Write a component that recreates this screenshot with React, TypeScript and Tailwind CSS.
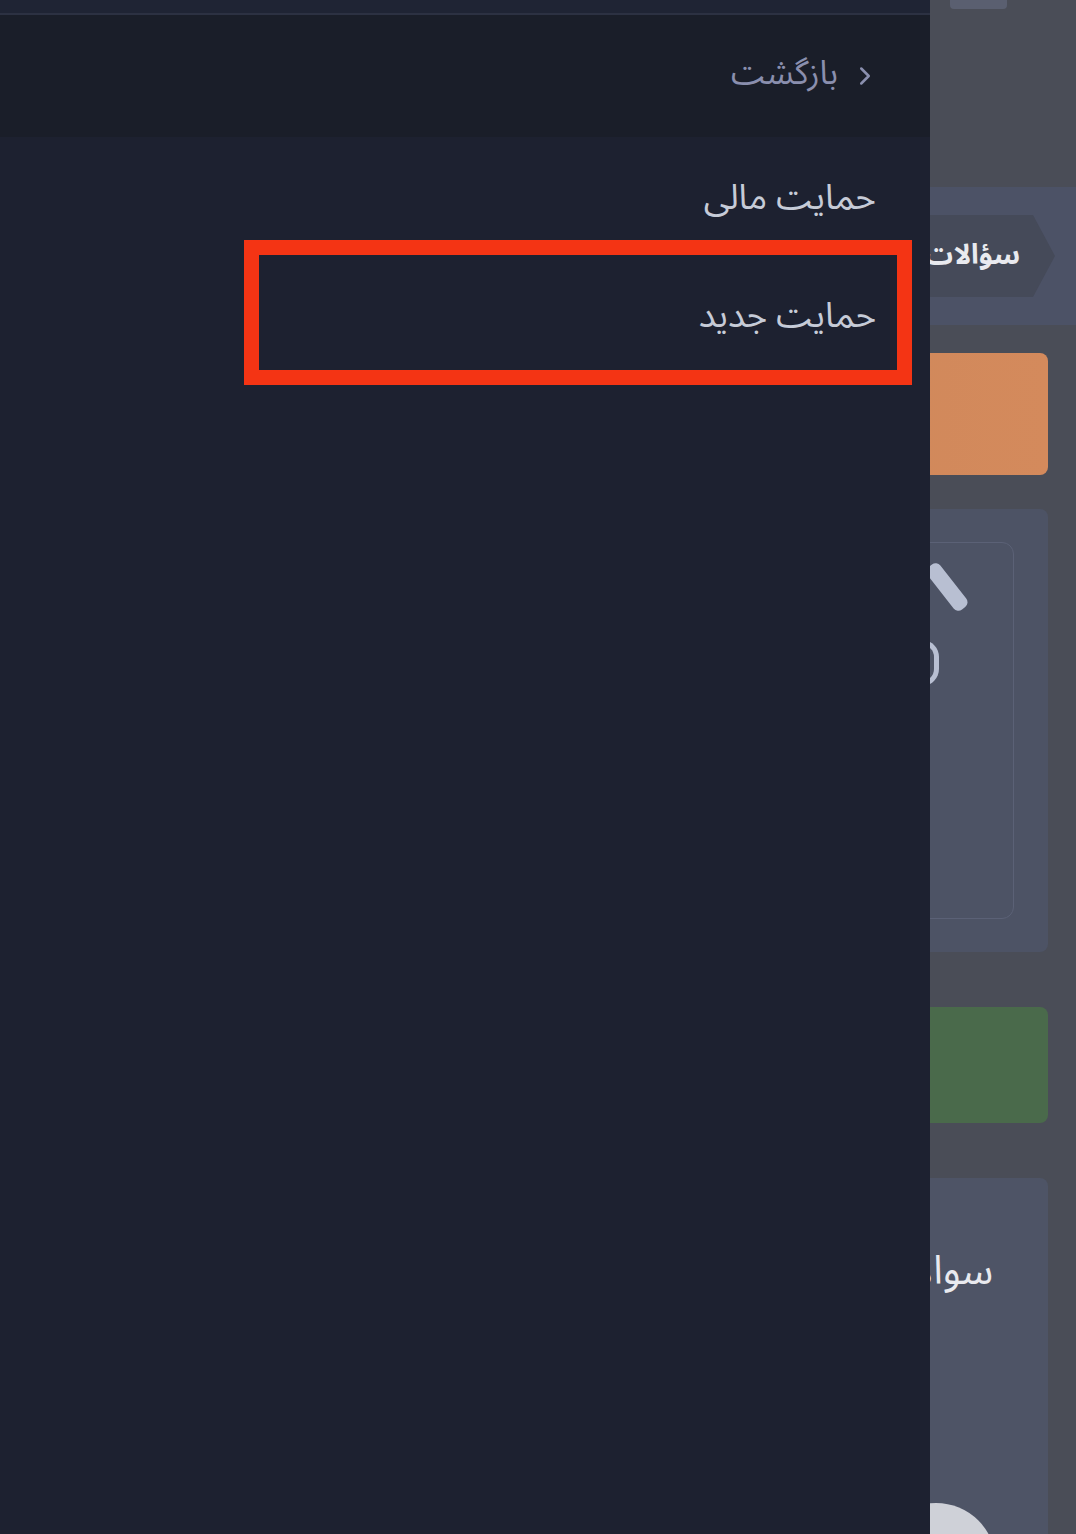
import { ChevronRight } from "lucide-react";

const menuItems = ["حمایت مالی", "حمایت جدید"];

function Drawer() {
  return (
    <aside
      dir="rtl"
      className="flex h-full w-[930px] shrink-0 flex-col bg-[#1d2130] font-['Noto_Sans_Arabic','DejaVu_Sans',sans-serif]"
    >
      <div className="h-[13px] bg-[#1f2434]" />
      <div className="h-[2px] bg-[#2c3142]" />
      <button className="flex h-[122px] items-center gap-[12px] bg-[#1a1e29] pr-[50px] text-[33px] text-[#8a8fae]">
        <ChevronRight className="h-[30px] w-[30px]" strokeWidth={2} />
        <span className="-mt-[4px]">بازگشت</span>
      </button>
      <nav className="flex flex-col pt-[2px]">
        {menuItems.map((item) => (
          <a key={item} className="flex h-[118px] items-center pr-[54px] text-[35px] text-[#c6cbd7]">
            {item}
          </a>
        ))}
      </nav>
    </aside>
  );
}

function PageBehind() {
  return (
    <div className="relative h-full flex-1 overflow-hidden bg-[#4a4d57]">
      <div dir="rtl" className="absolute right-0 top-0 flex w-[600px] flex-col font-['Noto_Sans_Arabic','DejaVu_Sans',sans-serif]">
        <div className="flex h-[187px] justify-end pl-[474px]">
          <div className="h-[9px] w-[57px] rounded-b bg-[#5a5f70]" />
        </div>
        <div className="flex h-[138px] items-center bg-[#4c5266]">
          <div className="mr-[21px] flex h-[82px] w-[500px] items-center bg-[#454a59] pr-[35px] [clip-path:polygon(0_0,calc(100%-22px)_0,100%_50%,calc(100%-22px)_100%,0_100%)]">
            <span className="text-[28px] font-bold text-[#e9eaef]">سؤالات</span>
          </div>
        </div>
        <div className="flex flex-col gap-[34px] pr-[28px] pt-[28px]">
          <div className="h-[122px] rounded-lg bg-gradient-to-l from-[#d48a5c] to-[#c98558]" />
          <div className="relative h-[443px] rounded-lg bg-[#4d5365] px-[34px] py-[33px]">
            <div className="h-full rounded-xl border border-[#5b6176]" />
            <div className="absolute left-[444px] top-[70px] h-[16px] w-[54px] rotate-[52deg] rounded-md bg-[#b8bfd2]" />
            <div className="absolute left-[446px] top-[131px] h-[46px] w-[17px] rounded-r-full border-[5px] border-l-0 border-[#b8bfd2]" />
          </div>
          <div className="mt-[21px] h-[116px] rounded-lg bg-[#4a6a4b]" />
          <div className="relative mt-[21px] h-[400px] rounded-lg bg-[#4e5466]">
            <div className="pr-[55px] pt-[64px] text-[40px] text-[#e9eaef]">سوالات</div>
            <div className="absolute left-[400px] top-[325px] h-[120px] w-[120px] rounded-full bg-[#cfd1d8]" />
          </div>
        </div>
      </div>
    </div>
  );
}

export default function App() {
  return (
    <div className="relative flex h-[1534px] w-full overflow-hidden bg-[#1d2130]">
      <Drawer />
      <PageBehind />
      <div className="pointer-events-none absolute left-[244px] top-[240px] h-[145px] w-[668px] border-[15px] border-[#f43414]" />
    </div>
  );
}
